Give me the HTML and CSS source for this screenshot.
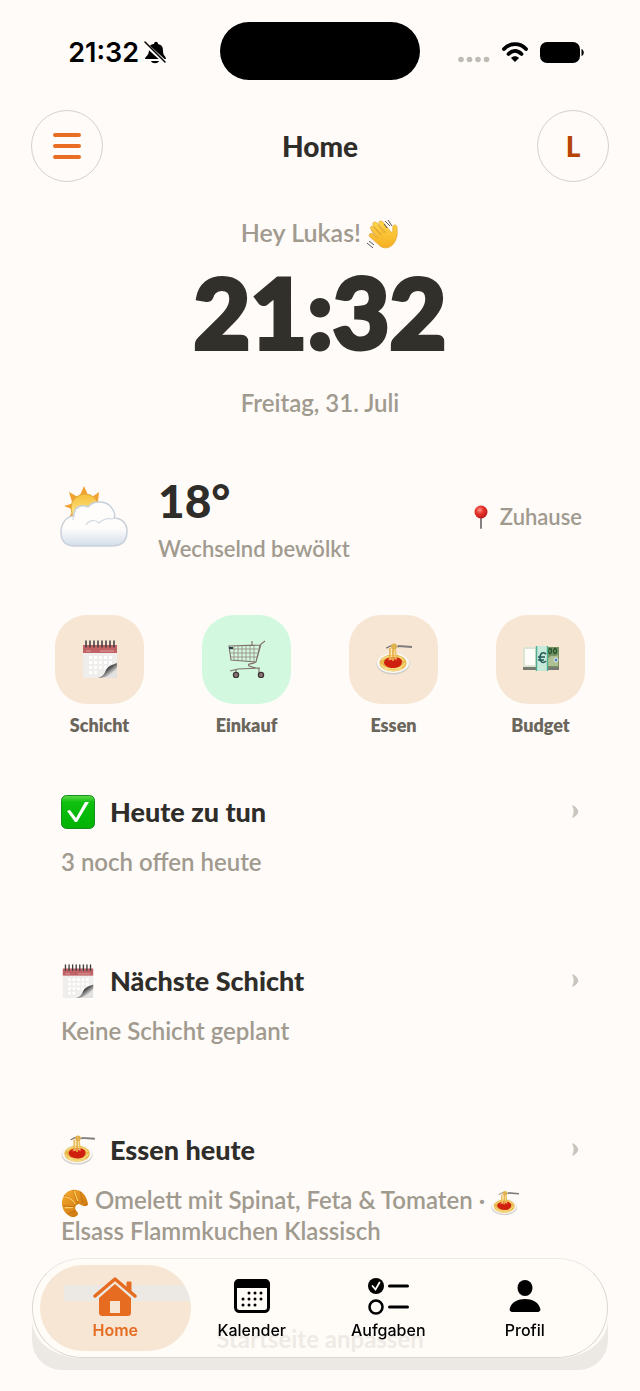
FILE: index.html
```html
<!DOCTYPE html>
<html lang="de">
  <head>
    <meta charset="UTF-8" />
    <meta name="viewport" content="width=device-width, initial-scale=1.0" />
    <title>Home</title>
    <link rel="stylesheet" href="styles.css">
  </head>
  <body>
    <svg class="sprite" aria-hidden="true">
      <defs>
        <linearGradient id="sun-fill" x1="0" y1="0" x2="0" y2="1">
          <stop offset="0" stop-color="#f6c03a" />
          <stop offset="1" stop-color="#fff0a0" />
        </linearGradient>
        <linearGradient id="cloud-fill" x1="0" y1="0" x2="0" y2="1">
          <stop offset="0.6" stop-color="#fffdfc" />
          <stop offset="1" stop-color="#d3dde8" />
        </linearGradient>
        <linearGradient id="check-fill" x1="0" y1="0" x2="0" y2="1">
          <stop offset="0" stop-color="#62d84c" />
          <stop offset="0.2" stop-color="#0fc010" />
          <stop offset="1" stop-color="#00b203" />
        </linearGradient>
        <linearGradient id="curl-fill" x1="0" y1="0" x2="1" y2="1">
          <stop offset="0.1" stop-color="#bbb" />
          <stop offset="0.45" stop-color="#444" />
          <stop offset="0.75" stop-color="#eee" />
        </linearGradient>
        <radialGradient id="pin-fill" cx="0.4" cy="0.35" r="0.7">
          <stop offset="0" stop-color="#ff9a8c" />
          <stop offset="0.4" stop-color="#e8372f" />
          <stop offset="1" stop-color="#b81417" />
        </radialGradient>
        <linearGradient id="hand-fill" x1="0" y1="0" x2="0" y2="1">
          <stop offset="0" stop-color="#ffd84a" />
          <stop offset="1" stop-color="#f5ae22" />
        </linearGradient>
        <linearGradient id="bread-fill" x1="0" y1="0" x2="1" y2="1">
          <stop offset="0" stop-color="#f7ad2b" />
          <stop offset="1" stop-color="#c26a0c" />
        </linearGradient>
      </defs>
      <symbol id="calendar" viewBox="0 0 36 38">
        <path d="M1 7h34v19c-5 6-12 10-18 12H1z" fill="#f0eeec" />
        <path d="M35 26v12H17z" fill="#e4e2e0" />
        <g fill="#fff">
          <path d="M7 16h3v3H7zm5 0h3v3h-3zm5 0h3v3h-3zm5 0h3v3h-3zm5 0h3v3h-3zM7 21h3v3H7zm5 0h3v3h-3zm5 0h3v3h-3zm5 0h3v3h-3zm5 0h3v3h-3zM7 26h3v3H7zm5 0h3v3h-3zm5 0h3v3h-3zm5 0h3v3h-3zM7 31h3v3H7zm5 0h3v3h-3z" />
        </g>
        <path d="M35 23c-5 2-9 3-11 7-2 5-4 7-8 8 9 0 15-4 19-10z" fill="url(#curl-fill)" />
        <path d="M1 5h34v8H1z" fill="#c06265" />
        <path d="M4 11h5m9 0h14" stroke="#dba09f" stroke-width="1" />
        <path d="M4 1v6m4-6v6m4-6v6m4-6v6m4-6v6m4-6v6m4-6v6m4-6v6" stroke="#423a3c" stroke-width="1.5" stroke-linecap="round" />
      </symbol>
      <symbol id="cart" viewBox="0 0 38 38">
        <path d="M1 6l31-1-4 17L3 20zM37 1l-4 3-5 18c-5 3-9 1-7 4l10 3v5M2 31l8-2 22-1M8 29v4M24 1v5" fill="none" stroke="#806f6a" stroke-width="1.1" />
        <path d="M2 9h28M2 13h27M3 17h26M6 6v14m4-14v15m4-15v15m4-15v15m4-15v15m4-15v16" fill="none" stroke="#948781" stroke-width="0.8" />
        <path d="M1 7h4v2H1z" fill="#254149" />
        <circle cx="8" cy="35" r="2.6" fill="#8b7676" stroke="#413438" stroke-width="1.3" />
        <circle cx="33" cy="35" r="2.6" fill="#8b7676" stroke="#413438" stroke-width="1.3" />
      </symbol>
      <symbol id="spaghetti" viewBox="0 0 36 32">
        <ellipse cx="17" cy="21" rx="16.5" ry="10.5" fill="#d1cec9" />
        <ellipse cx="17" cy="20" rx="16" ry="10" fill="#faf8f3" />
        <ellipse cx="17" cy="20" rx="13.5" ry="8.5" fill="#e8b94e" />
        <path d="M5 21c2 6 20 7 24-1M6 17c3-5 19-5 22 1M7 24c5 5 14 4 19 1" fill="none" stroke="#f8de86" stroke-width="1.2" />
        <path d="M8 19c1-6 16-7 18-1 0 6-5 7-9 7s-9-2-9-6z" fill="#cf200f" />
        <path d="M12 17c3-2 7-2 9 0" stroke="#f0553a" stroke-width="2" fill="none" />
        <path d="M14 17V5m3 13V4m3 12-1-12" stroke="#e4af46" stroke-width="1.7" />
        <path d="M15 17V6m4 10V5" stroke="#ffe391" stroke-width="0.8" />
        <path d="M10 5c3 0 4-4 9-2l4 1" fill="none" stroke="#747074" stroke-width="1.2" />
        <path d="M22 2l14 1v2l-14-1z" fill="#807c7d" />
        <circle cx="18" cy="3.5" r="3" fill="#dfb24f" />
      </symbol>
      <symbol id="money" viewBox="0 0 38 26">
        <path d="M1 2h36v22H1z" fill="#777a70" />
        <path d="M1 1h36v20H1z" fill="#dce5d3" />
        <path d="M3 3h10v16H3z" fill="#fffdfa" />
        <path d="M25 1h12v20H25z" fill="#779365" />
        <path d="M26 13c3-6 8 0 10-5v12H26z" fill="#aec194" />
        <circle cx="34" cy="14" r="2" fill="#477cc0" stroke="#eef1e5" />
        <ellipse cx="28" cy="5" rx="1.5" ry="2.5" fill="none" stroke="#24552d" stroke-width="1.3" />
        <ellipse cx="33" cy="5" rx="1.5" ry="2.5" fill="none" stroke="#24552d" stroke-width="1.3" />
        <path d="M14 0h12v25H14z" fill="#c6e9da" />
        <path d="M14.5 0v25m11-25v25" stroke="#4fae8f" stroke-width="1.4" />
        <path d="M24 8c-4-3-6 0-6 4s3 6 6 3M16 11h7m-7 3h6" fill="none" stroke="#235a59" stroke-width="1.6" />
      </symbol>
      <symbol id="check" viewBox="0 0 34 34">
        <rect x="0.5" y="0.5" width="33" height="33" rx="5" fill="url(#check-fill)" stroke="#168d20" />
        <path d="M6 16l3-1 6 8L24 7h4L16 27h-2z" fill="#fff" />
      </symbol>
      <symbol id="wave" viewBox="0 0 32 32">
        <path d="M4 9c-2-2 1-4 3-2l8 8-9-10c-1-3 2-4 4-2l9 10-7-9c-1-3 2-4 4-2l8 10c3 2 1-3 2-6 1-2 4-1 4 1 0 5 1 7-1 12-3 9-12 12-18 5L3 17c-2-2 0-5 3-3l5 4z" fill="url(#hand-fill)" stroke="#dd9726" stroke-width="0.6" />
        <path d="M9 17L4 10m9 5L7 7m10 6l-6-8" stroke="#e2a026" stroke-width="0.8" />
        <path d="M18 1l5 5M21 0l4 6M0 23l6 5M2 21l5 4M17 4l3 4" stroke="#555556" stroke-width="1" />
      </symbol>
      <symbol id="croissant" viewBox="0 0 28 30">
        <path d="M7 28C2 25 0 20 0 14 1 6 7 0 15 1c6 0 12 6 13 16-3 3-7 0-10-1-4 1-5 5-2 8 3 3 0 6-4 6-2 0-4-1-5-2z" fill="url(#bread-fill)" />
        <path d="M2 7c5 1 10 4 12 11M12 1l5 15M1 18l12 1M6 27l9-4M20 3l2 12" fill="none" stroke="#b9680f" stroke-width="0.8" />
        <path d="M3 8c5 1 9 4 11 8M13 2l4 11M3 20l9 0" fill="none" stroke="#ffd166" stroke-width="1.2" />
      </symbol>
      <symbol id="pin" viewBox="0 0 14 24">
        <path d="M7 11v12" stroke="#878082" stroke-width="2" stroke-linecap="round" />
        <circle cx="7" cy="7" r="6.5" fill="url(#pin-fill)" />
      </symbol>
      <symbol id="chevron" viewBox="0 0 8 13">
        <path d="M2 1c6 4 6 7 0 11 2-4 2-7 0-11z" fill="#c9c5bf" stroke="#c9c5bf" stroke-width="1.5" stroke-linejoin="round" />
      </symbol>
    </svg>

    <div class="status-bar">
      <div class="status-time">
        <span>21:32</span>
        <svg width="24" height="24" viewBox="0 0 24 24" aria-hidden="true">
          <path d="M2 19c0-3 4-3 4-9 0-4 2-6 5-6 0-3 4-3 4 0 4 1 5 3 5 7 0 5 3 5 3 8z" />
          <path d="M8 21h8c-1 3-7 3-8 0z" />
          <path d="M1 3l22 20" stroke="#fffbf8" stroke-width="4" />
          <path d="M2 2l20 20" stroke="#000" stroke-width="1.5" stroke-linecap="round" />
        </svg>
      </div>
      <div class="island"></div>
      <div class="status-icons">
        <svg width="32" height="7" viewBox="0 0 32 7" aria-hidden="true">
          <g fill="#bebab4">
            <circle cx="3" cy="3.5" r="2.8" />
            <circle cx="11.5" cy="3.5" r="2.8" />
            <circle cx="20" cy="3.5" r="2.8" />
            <circle cx="28.5" cy="3.5" r="2.8" />
          </g>
        </svg>
        <svg width="26" height="20" viewBox="0 0 26 20" aria-hidden="true">
          <path d="M2 7c6-6.500 16-6.500 22 0M6.500 12c4-4 9-4 13 0" fill="none" stroke="#000" stroke-width="3.800" stroke-linecap="round" />
          <path d="M9 16c2-2.500 6-2.500 8 0l-4 4z" />
        </svg>
        <svg width="44" height="21" viewBox="0 0 44 21" aria-hidden="true">
          <rect width="40" height="21" rx="7" />
          <path d="M41.500 7c3 1 3 6 0 7z" />
        </svg>
      </div>
    </div>

    <header class="header">
      <button class="round-button" aria-label="Menü">
        <svg width="28" height="26" viewBox="0 0 28 26" aria-hidden="true">
          <path d="M2 2h24M2 13h24M2 24h24" stroke="#e96d22" stroke-width="4" stroke-linecap="round" />
        </svg>
      </button>
      <h1>Home</h1>
      <button class="round-button">L</button>
    </header>

    <main>
      <section class="welcome">
        <p class="greeting">Hey Lukas! <svg class="emoji-wave" role="img" aria-label="Winken"><use href="#wave" /></svg></p>
        <p class="clock">21:32</p>
        <p class="date">Freitag, 31. Juli</p>
      </section>

      <section class="weather">
        <svg width="68" height="62" viewBox="0 0 68 62" aria-hidden="true">
          <path d="M24 0l4 9h-8zM9 6l9 5-6 5zM39 6l-1 10-6-5zM4 20l10-3v7zM8 36l3-9 6 5z" fill="#f0a330" />
          <circle cx="25" cy="22" r="14" fill="url(#sun-fill)" stroke="#e0a63c" />
          <path d="M15 60C5 60 1 54 1 46c0-9 6-16 13-16-1-9 8-12 14-9 5-7 21-8 26 5 1 2 1 4 0 6 8 0 13 6 13 13 0 10-5 15-15 15z" fill="url(#cloud-fill)" stroke="#c8d1da" stroke-width="1.5" />
          <path d="M13 34c0-4 1-8 3-9M26 39c3-5 9-6 13-2 4-4 9-5 14-4" fill="none" stroke="#d2dae1" stroke-width="1.2" />
        </svg>
        <div class="weather-text">
          <p class="temperature">18°</p>
          <p class="conditions">Wechselnd bewölkt</p>
        </div>
        <p class="place"><svg width="14" height="24" aria-hidden="true"><use href="#pin" /></svg> Zuhause</p>
      </section>

      <nav class="shortcuts" aria-label="Schnellzugriff">
        <a href="#schicht"><span class="tile"><svg width="36" height="38"><use href="#calendar" /></svg></span>Schicht</a>
        <a href="#einkauf"><span class="tile tile-green"><svg width="38" height="38"><use href="#cart" /></svg></span>Einkauf</a>
        <a href="#essen"><span class="tile"><svg width="36" height="32"><use href="#spaghetti" /></svg></span>Essen</a>
        <a href="#budget"><span class="tile"><svg width="38" height="26"><use href="#money" /></svg></span>Budget</a>
      </nav>

      <a class="card" href="#aufgaben">
        <h2><svg class="card-icon"><use href="#check" /></svg>Heute zu tun<svg class="chevron"><use href="#chevron" /></svg></h2>
        <p>3 noch offen heute</p>
      </a>
      <a class="card" id="schicht" href="#kalender">
        <h2><svg class="card-icon"><use href="#calendar" /></svg>Nächste Schicht<svg class="chevron"><use href="#chevron" /></svg></h2>
        <p>Keine Schicht geplant</p>
      </a>
      <a class="card" id="essen" href="#essen">
        <h2><svg class="card-icon card-icon-food"><use href="#spaghetti" /></svg>Essen heute<svg class="chevron"><use href="#chevron" /></svg></h2>
        <p><svg class="emoji-meal" aria-hidden="true"><use href="#croissant" /></svg> Omelett mit Spinat, Feta &amp; Tomaten · <svg class="emoji-meal" aria-hidden="true"><use href="#spaghetti" /></svg> Elsass Flammkuchen Klassisch</p>
      </a>
      <button class="customize">Startseite anpassen</button>
    </main>

    <nav class="tab-bar" aria-label="Hauptnavigation">
      <a class="active" href="#home">
        <svg width="44" height="40" viewBox="0 0 44 40" aria-hidden="true">
          <path d="M2 19L22 2l20 17" fill="none" stroke="#e66c22" stroke-width="3.5" stroke-linecap="round" stroke-linejoin="round" />
          <path d="M34 5h4v12l-4-4z" fill="#e66c22" stroke="#e66c22" />
          <path fill-rule="evenodd" d="M22 7l16 14v14c0 3-1 4-4 4H10c-3 0-4-1-4-4V21zM17 24v12h10V24z" fill="#e66c22" />
        </svg>
        Home
      </a>
      <a href="#kalender">
        <svg width="38" height="40" viewBox="0 0 38 40" aria-hidden="true">
          <rect x="2.5" y="4.500" width="33" height="30" rx="4" fill="none" stroke="#000" stroke-width="3" />
          <path d="M1 11V7c0-3 2-5 5-5h26c3 0 5 2 5 5v4z" />
          <path d="M16 16h.01M22 16h.01M28 16h.01M10 22h.01M16 22h.01M22 22h.01M28 22h.01M10 28h.01M16 28h.01M22 28h.01" stroke="#000" stroke-width="3" stroke-linecap="round" />
        </svg>
        Kalender
      </a>
      <a href="#aufgaben">
        <svg width="42" height="40" viewBox="0 0 42 40" aria-hidden="true">
          <circle cx="9" cy="9" r="8" />
          <path d="M5.500 9l3 3.500L12.500 5.500" fill="none" stroke="#fffbf8" stroke-width="1.800" stroke-linecap="round" />
          <circle cx="9" cy="30" r="6.500" fill="none" stroke="#000" stroke-width="2.600" />
          <path d="M22.500 9h18M22.500 30h18" stroke="#000" stroke-width="3" stroke-linecap="round" />
        </svg>
        Aufgaben
      </a>
      <a href="#profil">
        <svg width="32" height="40" viewBox="0 0 32 40" aria-hidden="true">
          <ellipse cx="16" cy="11" rx="7.500" ry="8" />
          <path d="M4 35c-3 0-4-2-3-4 3-12 27-12 30 0 1 2 0 4-3 4z" />
        </svg>
        Profil
      </a>
    </nav>
  </body>
</html>
```

FILE: styles.css
```css
body {
  margin: 0;
  background-color: #fffbf8;
  font-family: Lato, 'Open Sans', sans-serif;
  color: #2f2d29;
}

h1,
h2,
p {
  margin: 0;
}

a {
  text-decoration: none;
  color: inherit;
}

.sprite {
  position: absolute;
  width: 0;
  height: 0;
}

.status-bar {
  display: grid;
  grid-template-columns: 1fr 200px 1fr;
  align-items: center;
  height: 58px;
  padding: 22px 0 30px;
  color: #000;
}

.status-time {
  display: flex;
  align-items: center;
  justify-content: flex-end;
  gap: 4px;
  padding: 2px 53px 0 0;
  font-family: Inter, sans-serif;
  font-size: 27px;
  font-weight: 600;
}

.island {
  height: 58px;
  border-radius: 29px;
  background-color: #000;
}

.status-icons {
  display: flex;
  align-items: center;
  gap: 12px;
  padding: 2px 0 0 38px;
}

.status-icons svg:first-child {
  margin-top: 14px;
}

.header {
  display: flex;
  align-items: center;
  justify-content: space-between;
  padding: 0 31px;
}

.header h1 {
  font-size: 28px;
  font-weight: 900;
}

.round-button {
  display: flex;
  align-items: center;
  justify-content: center;
  width: 72px;
  height: 72px;
  padding: 0;
  border: 1px solid #d5d0ca;
  border-radius: 50%;
  background: none;
  font-family: inherit;
  font-size: 28px;
  font-weight: 900;
  color: #b84404;
}

.welcome {
  padding-top: 34px;
  text-align: center;
  font-size: 24px;
  font-weight: 600;
  line-height: 32px;
  color: #a09a8f;
}

.greeting {
  font-size: 25px;
}

.emoji-wave {
  width: 32px;
  height: 32px;
  margin: -2px 0;
  vertical-align: middle;
}

.clock {
  padding: 12px 0 27px;
  font-size: 98px;
  font-weight: 900;
  line-height: 98px;
  color: #32302b;
  -webkit-text-stroke: 4px #32302b;
  stroke-linejoin: round;
}

.weather {
  display: flex;
  align-items: center;
  padding: 50px 58px 0 60px;
}

.weather-text {
  flex: 1;
  padding-left: 30px;
}

.temperature {
  font-size: 46px;
  font-weight: 900;
  line-height: 64px;
}

.conditions,
.place {
  font-size: 22px;
  font-weight: 600;
  line-height: 32px;
  color: #a09a8f;
}

.place {
  display: flex;
  align-items: center;
  gap: 12px;
}

.shortcuts {
  display: grid;
  grid-template-columns: repeat(4, 1fr);
  padding: 50px 26px 0;
}

.shortcuts a {
  display: flex;
  flex-direction: column;
  align-items: center;
  gap: 9px;
  font-size: 18px;
  font-weight: 800;
  line-height: 24px;
  color: #6b665c;
}

.tile {
  display: flex;
  align-items: center;
  justify-content: center;
  width: 89px;
  height: 89px;
  border-radius: 32px;
  background-color: #f6e6d3;
}

.tile-green {
  background-color: #d2f9df;
}

.card {
  display: block;
  padding: 55px 61px 0;
  font-size: 24px;
  line-height: 31px;
}

.card + .card {
  padding-top: 84px;
}

.card h2 {
  display: flex;
  align-items: center;
  height: 40px;
  font-size: 27px;
  font-weight: 900;
}

.card p {
  padding-top: 14px;
  font-weight: 600;
  color: #a09a8f;
}

.card-icon {
  width: 34px;
  height: 34px;
  margin-right: 15px;
}

.card-icon-food {
  height: 30px;
}

.chevron {
  width: 8px;
  height: 13px;
  margin-left: auto;
}

.emoji-meal {
  width: 28px;
  height: 28px;
  margin: -4px 0;
  vertical-align: middle;
}

.customize {
  display: block;
  margin: 76px auto 34px;
  padding: 0;
  border: 0;
  background: none;
  font-family: inherit;
  font-size: 24px;
  font-weight: 700;
  line-height: 34px;
  color: #a09a8f;
}

/* Floating bar, the page scrolls underneath */
.tab-bar {
  position: fixed;
  right: 32px;
  bottom: 33px;
  left: 32px;
  display: grid;
  grid-template-columns: repeat(4, 1fr);
  padding: 6px 14px;
  border: 1px solid #ddd7cf;
  border-top-color: #ece9e5;
  border-radius: 50px;
  background-color: rgba(255, 251, 248, 0.82);
}

.tab-bar::before {
  content: '';
  position: absolute;
  z-index: -1;
  top: 60px;
  right: -1px;
  bottom: -13px;
  left: -1px;
  border-radius: 0 0 30px 30px;
  background-color: #ece9e5;
  clip-path: path('M0 0C0 22 22 39 50 39H526C554 39 576 22 576 0V22C576 42 562 52 540 52H36C14 52 0 42 0 22Z');
}

.tab-bar a {
  display: flex;
  flex-direction: column;
  align-items: center;
  padding: 12px 0 8px;
  font-family: Inter, sans-serif;
  font-size: 16px;
  font-weight: 500;
  line-height: 26px;
  color: #000;
}

.tab-bar .active {
  margin: 0 -7px;
  border-radius: 43px;
  background: linear-gradient(#ece9e4, #ece9e4) 24px 20px / 130px 16px no-repeat #f6e6d3;
  font-weight: 600;
  color: #e66c22;
}
```
